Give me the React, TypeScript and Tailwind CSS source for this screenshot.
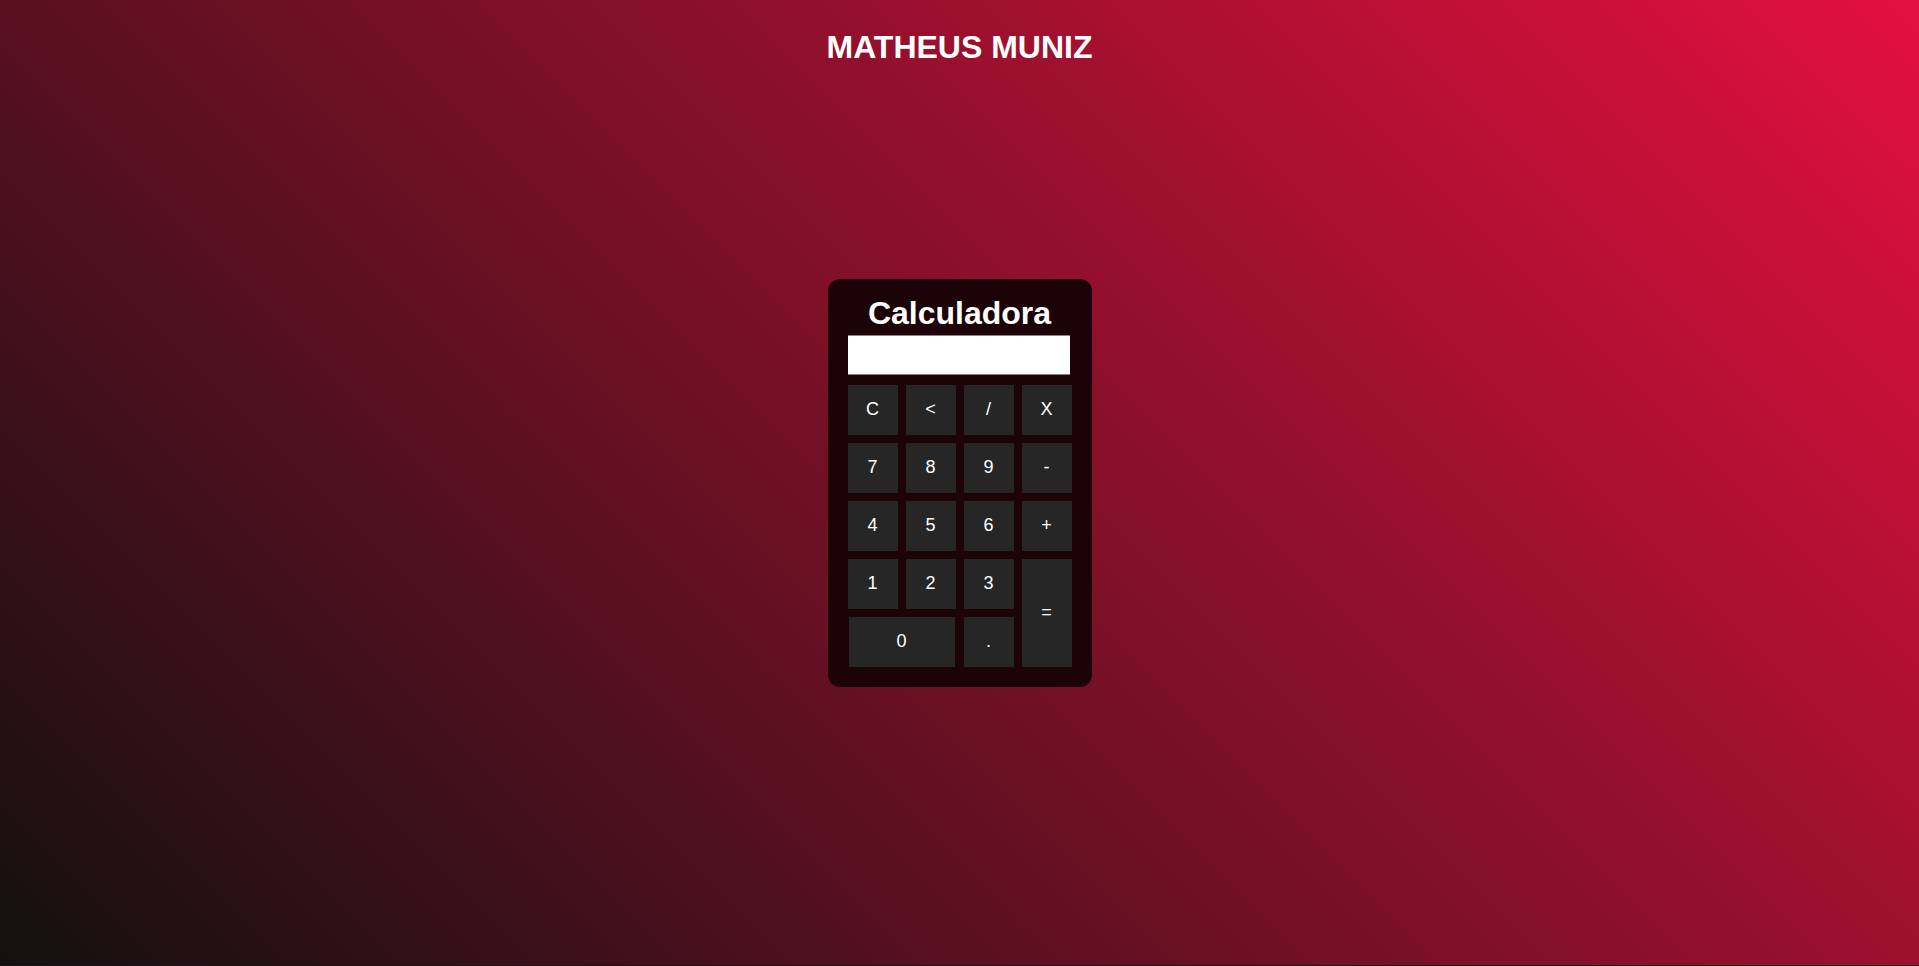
const keys: { label: string; cls?: string }[] = [
  { label: "C" },
  { label: "<" },
  { label: "/" },
  { label: "X" },
  { label: "7" },
  { label: "8" },
  { label: "9" },
  { label: "-" },
  { label: "4" },
  { label: "5" },
  { label: "6" },
  { label: "+" },
  { label: "1" },
  { label: "2" },
  { label: "3" },
  { label: "=", cls: "row-span-2" },
  { label: "0", cls: "col-span-2 mx-px" },
  { label: "." },
];

export default function App() {
  return (
    <div className="flex h-[966px] flex-col font-['Liberation_Sans',Arial,sans-serif]">
      <div className="grid h-[965px] grid-rows-[1fr_auto_1fr] bg-[linear-gradient(45deg,#131010,#e3103e)] text-white">
        <h1 className="mt-[29px] text-center text-[32px] font-bold leading-[37px]">
          MATHEUS MUNIZ
        </h1>
        <div className="flex justify-center">
          <div className="w-[264px] rounded-xl bg-[#1c0307] px-5 pb-5 pt-4">
            <h2 className="text-center text-[32px] font-bold leading-[37px]">
              Calculadora
            </h2>
            <input
              type="text"
              readOnly
              className="mt-[3px] block h-10 w-[222px] border-y border-[#8f8087] bg-white text-right text-2xl text-black outline-none"
            />
            <div className="mt-[10px] grid grid-cols-[repeat(4,50px)] grid-rows-[repeat(5,50px)] gap-2">
              {keys.map((k) => (
                <button
                  key={k.label}
                  className={`flex items-center justify-center bg-[#262626] text-[18px] text-white ${k.cls ?? ""}`}
                >
                  {k.label}
                </button>
              ))}
            </div>
          </div>
        </div>
        <div />
      </div>
      <div className="h-px bg-[#17151d]" />
    </div>
  );
}
